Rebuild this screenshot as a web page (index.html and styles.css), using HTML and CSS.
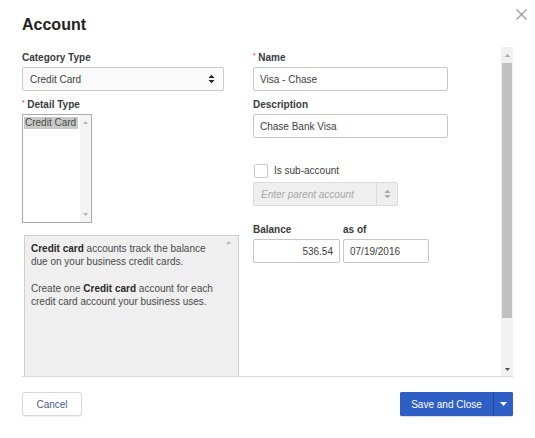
FILE: index.html
```html
<!DOCTYPE html>
<html lang="en">
<head>
<meta charset="utf-8">
<title>Account</title>
<link rel="stylesheet" href="styles.css">
</head>
<body>
<div class="dialog">
  <header class="header">
    <h1 class="title">Account</h1>
    <button class="close" aria-label="Close">
      <svg width="11" height="11" viewBox="0 0 11 11"><path d="M0.5 0.5L10.5 10.5M10.5 0.5L0.5 10.5" stroke="#9b9b9b" stroke-width="1.3" fill="none"/></svg>
    </button>
  </header>

  <div class="main">
    <div class="content">
      <div class="col col-left">
        <label class="label">Category Type</label>
        <div class="select">
          <span class="select-value">Credit Card</span>
          <svg class="updown" width="7" height="10" viewBox="0 0 7 10"><path d="M0.5 4L3.5 0.8L6.5 4Z M0.5 6L3.5 9.2L6.5 6Z" fill="#222"/></svg>
        </div>

        <label class="label gap"><span class="req">*</span>Detail Type</label>
        <div class="listbox">
          <div class="list-items"><span class="list-item">Credit Card</span></div>
          <div class="list-sb">
            <svg width="5" height="3" viewBox="0 0 5 3"><path d="M0 3L2.5 0L5 3Z" fill="#b5b5b5"/></svg>
            <svg width="5" height="3" viewBox="0 0 5 3"><path d="M0 0L2.5 3L5 0Z" fill="#b5b5b5"/></svg>
          </div>
        </div>

        <div class="help">
          <div class="help-text">
            <p class="para"><b>Credit card</b> accounts track the balance due on your business credit cards.</p>
            <p class="para">Create one <b>Credit card</b> account for each credit card account your business uses.</p>
          </div>
          <div class="help-sb">
            <svg width="5" height="3" viewBox="0 0 5 3"><path d="M0 3L2.5 0L5 3Z" fill="#b9b9b9"/></svg>
          </div>
        </div>
      </div>

      <div class="col col-right">
        <label class="label"><span class="req">*</span>Name</label>
        <input class="field wide" type="text" value="Visa - Chase">

        <label class="label gap">Description</label>
        <input class="field wide" type="text" value="Chase Bank Visa">

        <div class="check-row">
          <span class="checkbox"></span>
          <span class="check-label">Is sub-account</span>
        </div>

        <div class="select parent">
          <span class="placeholder">Enter parent account</span>
          <span class="parent-arrow">
            <svg width="7" height="10" viewBox="0 0 7 10"><path d="M0.5 4L3.5 0.8L6.5 4Z M0.5 6L3.5 9.2L6.5 6Z" fill="#a8a8a8"/></svg>
          </span>
        </div>

        <div class="balance-row">
          <div class="balance-col">
            <label class="label">Balance</label>
            <input class="field num" type="text" value="536.54">
          </div>
          <div class="date-col">
            <label class="label">as of</label>
            <input class="field date" type="text" value="07/19/2016">
          </div>
        </div>
      </div>
    </div>

    <div class="scrollbar">
      <div class="sb-btn sb-up">
        <svg width="5" height="3" viewBox="0 0 5 3"><path d="M0 3L2.5 0L5 3Z" fill="#a3a3a3"/></svg>
      </div>
      <div class="sb-track"><div class="sb-thumb"></div></div>
      <div class="sb-btn sb-down">
        <svg width="5" height="3" viewBox="0 0 5 3"><path d="M0 0L2.5 3L5 0Z" fill="#505050"/></svg>
      </div>
    </div>
  </div>

  <footer class="footer">
    <button class="btn-cancel">Cancel</button>
    <div class="save-group">
      <button class="btn-save">Save and Close</button>
      <button class="btn-caret" aria-label="More">
        <svg width="7" height="4" viewBox="0 0 7 4"><path d="M0 0L3.5 4L7 0Z" fill="#fff"/></svg>
      </button>
    </div>
  </footer>
</div>
</body>
</html>
```

FILE: styles.css
```css
* { box-sizing: border-box; }

html, body {
  margin: 0;
  padding: 0;
  background: #fff;
}

body {
  font-family: "Liberation Sans", Arial, Helvetica, sans-serif;
  font-size: 10px;
  color: #393a3d;
}

.dialog {
  width: 535px;
  height: 438px;
  display: flex;
  flex-direction: column;
}

/* Header */
.header {
  height: 47px;
  display: flex;
  justify-content: space-between;
  align-items: flex-start;
  padding: 0 8px 0 22px;
}

.title {
  margin: 16px 0 0;
  font-size: 16px;
  line-height: 18px;
  font-weight: bold;
  color: #222;
}

.close {
  margin-top: 9px;
  padding: 0;
  border: 0;
  background: none;
  width: 11px;
  height: 11px;
}
.close svg { display: block; }

/* Main scroll area */
.main {
  height: 330px;
  margin: 0 22px;
  display: flex;
  border-bottom: 1px solid #dcdcdc;
}

.content {
  flex: 1;
  display: grid;
  grid-template-columns: 217px 1fr;
  column-gap: 14px;
  padding-top: 4px;
  overflow: hidden;
}

.col {
  display: flex;
  flex-direction: column;
  align-items: flex-start;
}

.label {
  display: block;
  font-weight: bold;
  font-size: 10px;
  line-height: 13px;
  margin-bottom: 3px;
  color: #393a3d;
}
.label.gap { margin-top: 7px; }

.req {
  color: #d52b1e;
  font-size: 7px;
  font-weight: normal;
  vertical-align: top;
  line-height: 9px;
  margin-right: 2.5px;
}

/* Selects */
.select {
  width: 202px;
  height: 24px;
  display: flex;
  align-items: center;
  justify-content: space-between;
  padding: 0 8px 0 7px;
  border: 1px solid #cacaca;
  border-radius: 2px;
  background: #fafafa;
  color: #404040;
}
.updown { display: block; }

/* List box */
.listbox {
  width: 70px;
  height: 109px;
  border: 1px solid #a9a9a9;
  display: flex;
  background: #fff;
}
.list-items {
  flex: 1;
  padding: 2px 0 0 1px;
}
.list-item {
  display: inline-block;
  background: #c9c9c9;
  color: #4a4a4a;
  line-height: 12px;
  padding: 0 2px 0 1px;
}
.list-sb {
  width: 11px;
  background: #f4f4f4;
  display: flex;
  flex-direction: column;
  justify-content: space-between;
  align-items: center;
  padding: 6px 0 6px;
}
.list-sb svg { display: block; }

/* Help box */
.help {
  margin: 12px 0 0 2px;
  width: 215px;
  height: 200px;
  flex: none;
  border: 1px solid #cfcfcf;
  background: #efefef;
  display: flex;
  color: #4a4a4a;
}
.help-text {
  width: 193px;
  padding: 6px 0 0 6px;
  line-height: 13px;
}
.para { margin: 0; }
.para + .para { margin-top: 14px; }
.para b { color: #2a2a2a; font-weight: bold; }
.help-sb {
  flex: 1;
  display: flex;
  justify-content: center;
  padding-top: 5px;
}
.help-sb svg { display: block; }

/* Right column fields */
.field {
  display: block;
  height: 24px;
  padding: 0 6px;
  border: 1px solid #c8c8c8;
  border-radius: 2px;
  font-family: "Liberation Sans", Arial, sans-serif;
  font-size: 10px;
  color: #404040;
  background: #fff;
  outline: none;
  margin: 0;
}
.field.wide { width: 195px; }
.field.num { width: 87px; text-align: right; }
.field.date { width: 86px; }

.check-row {
  margin-top: 26px;
  display: flex;
  align-items: center;
  height: 14px;
  line-height: 14px;
}
.checkbox {
  width: 14px;
  height: 14px;
  margin-left: 1px;
  border: 1px solid #c9c9c9;
  border-radius: 2px;
  background: #fff;
}
.check-label {
  margin-left: 6px;
  color: #404040;
}

.select.parent {
  margin-top: 4px;
  width: 145px;
  padding: 0 0 0 7px;
  background: #efefef;
  border-color: #dadada;
}
.placeholder {
  font-style: italic;
  color: #a8a8a8;
}
.parent-arrow {
  width: 21px;
  height: 100%;
  border-left: 1px solid #dadada;
  display: flex;
  align-items: center;
  justify-content: center;
}

.balance-row {
  margin-top: 17px;
  display: flex;
  gap: 3px;
}

/* Scrollbar */
.scrollbar {
  width: 12px;
  background: #f1f1f1;
  display: flex;
  flex-direction: column;
}
.sb-btn {
  display: flex;
  align-items: center;
  justify-content: center;
}
.sb-btn svg { display: block; }
.sb-up { height: 16px; }
.sb-down { height: 14px; }
.sb-track { flex: 1; }
.sb-thumb {
  height: 255px;
  margin: 0 1px;
  background: #c1c1c1;
}

/* Footer */
.footer {
  display: flex;
  justify-content: space-between;
  align-items: flex-start;
  padding: 15px 22px 0;
}

.btn-cancel {
  width: 60px;
  height: 24px;
  padding: 0;
  border: 1px solid #d6d8dc;
  border-radius: 2px;
  background: #fff;
  box-shadow: 0 1px 1px rgba(0,0,0,0.06);
  font-family: "Liberation Sans", Arial, sans-serif;
  font-size: 10px;
  color: #4a5b86;
}

.save-group {
  display: flex;
  height: 24px;
  border-radius: 2px;
  overflow: hidden;
  background: #2f5ec5;
  box-shadow: 0 1px 1px rgba(0,0,0,0.15);
}
.btn-save {
  width: 93px;
  height: 24px;
  padding: 0;
  border: 0;
  background: #2f5ec5;
  color: #fff;
  font-family: "Liberation Sans", Arial, sans-serif;
  font-size: 10px;
}
.btn-caret {
  width: 20px;
  height: 24px;
  padding: 0;
  border: 0;
  border-left: 1px solid #234c9f;
  background: #2f5ec5;
  display: flex;
  align-items: center;
  justify-content: center;
}
.btn-caret svg { display: block; }
```
